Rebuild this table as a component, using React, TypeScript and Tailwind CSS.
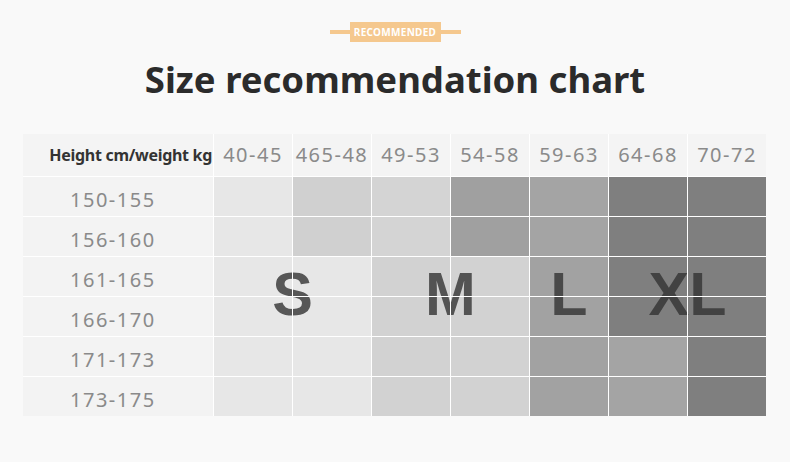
import React from "react";

const WEIGHTS = ["40-45", "465-48", "49-53", "54-58", "59-63", "64-68", "70-72"];

const ROWS: { label: string; cells: string[] }[] = [
  {
    label: "150-155",
    cells: ["bg-[#e7e7e7]", "bg-[#d0d0d0]", "bg-[#d4d4d4]", "bg-[#a0a0a0]", "bg-[#a4a4a4]", "bg-[#7f7f7f]", "bg-[#7f7f7f]"],
  },
  {
    label: "156-160",
    cells: ["bg-[#e7e7e7]", "bg-[#d0d0d0]", "bg-[#d4d4d4]", "bg-[#a0a0a0]", "bg-[#a4a4a4]", "bg-[#7f7f7f]", "bg-[#7f7f7f]"],
  },
  {
    label: "161-165",
    cells: ["bg-[#e7e7e7]", "bg-[#e7e7e7]", "bg-[#d2d2d2]", "bg-[#d2d2d2]", "bg-[#a2a2a2]", "bg-[#7f7f7f]", "bg-[#7f7f7f]"],
  },
  {
    label: "166-170",
    cells: ["bg-[#e7e7e7]", "bg-[#e7e7e7]", "bg-[#d2d2d2]", "bg-[#d2d2d2]", "bg-[#a2a2a2]", "bg-[#7f7f7f]", "bg-[#7f7f7f]"],
  },
  {
    label: "171-173",
    cells: ["bg-[#e7e7e7]", "bg-[#e7e7e7]", "bg-[#d2d2d2]", "bg-[#d2d2d2]", "bg-[#a2a2a2]", "bg-[#a4a4a4]", "bg-[#7f7f7f]"],
  },
  {
    label: "173-175",
    cells: ["bg-[#e7e7e7]", "bg-[#e7e7e7]", "bg-[#d2d2d2]", "bg-[#d2d2d2]", "bg-[#a2a2a2]", "bg-[#a4a4a4]", "bg-[#7f7f7f]"],
  },
];

// size letters sit on top of the cells, the white grid lines still cross them
const SIZES: { text: string; place: string; wide: boolean }[] = [
  { text: "S", place: "col-start-2 col-span-2", wide: true },
  { text: "M", place: "col-start-4 col-span-2", wide: true },
  { text: "L", place: "col-start-6 col-span-1", wide: false },
  { text: "XL", place: "col-start-7 col-span-2", wide: true },
];

const GRID = "grid grid-cols-[190px_repeat(7,78px)] grid-rows-[42px_repeat(6,39px)] gap-px";

export default function App() {
  return (
    <div className="w-[790px] h-[462px] bg-[#f9f9f9] flex flex-col items-center pt-[22px] font-['Noto_Sans',sans-serif]">
      {/* Badge */}
      <div className="relative flex items-center justify-center w-[131px] h-[20px]">
        <div className="absolute inset-x-0 top-[8px] h-[4px] bg-[#f5c88e]" />
        <span className="relative h-[20px] w-[91px] flex items-center justify-center bg-[#f5c88e] text-white text-[10px] font-bold tracking-[0.3px]">
          RECOMMENDED
        </span>
      </div>

      {/* Title */}
      <h1 className="mt-[15px] text-[36.5px] leading-[44px] font-bold text-[#2b2b2b]">
        Size recommendation chart
      </h1>

      {/* Chart */}
      <div className="relative mt-[33px] self-start ml-[23px]">
        <div className={`${GRID} bg-white`}>
          <div className="bg-[#f4f4f4] flex items-center justify-end pr-[1px] text-[16px] font-bold text-[#333] tracking-[-0.3px]">
            Height cm/weight kg
          </div>
          {WEIGHTS.map((w) => (
            <div
              key={w}
              className="bg-[#f4f4f4] flex items-center justify-center text-[20px] text-[#8a8a8a] tracking-[1.5px]"
            >
              {w}
            </div>
          ))}
          {ROWS.map((row) => (
            <React.Fragment key={row.label}>
              <div className="bg-[#f3f3f3] flex items-center pl-[47px] pt-[6px] text-[20px] text-[#8a8a8a] tracking-[1.5px]">
                {row.label}
              </div>
              {row.cells.map((c, i) => (
                <div key={i} className={c} />
              ))}
            </React.Fragment>
          ))}
        </div>

        <div className={`${GRID} absolute inset-0 pointer-events-none`}>
          {SIZES.map((s) => (
            <div key={s.text} className={`${s.place} row-start-4 row-span-2 relative flex items-center justify-center pb-[4px]`}>
              <span className="font-['Liberation_Sans',Arial,sans-serif] font-bold text-[61px] leading-none text-[#333]/80">
                {s.text}
              </span>
              <div className="absolute inset-x-0 top-[39px] h-px bg-white" />
              {s.wide && <div className="absolute inset-y-0 left-[78px] w-px bg-white" />}
            </div>
          ))}
        </div>
      </div>
    </div>
  );
}
